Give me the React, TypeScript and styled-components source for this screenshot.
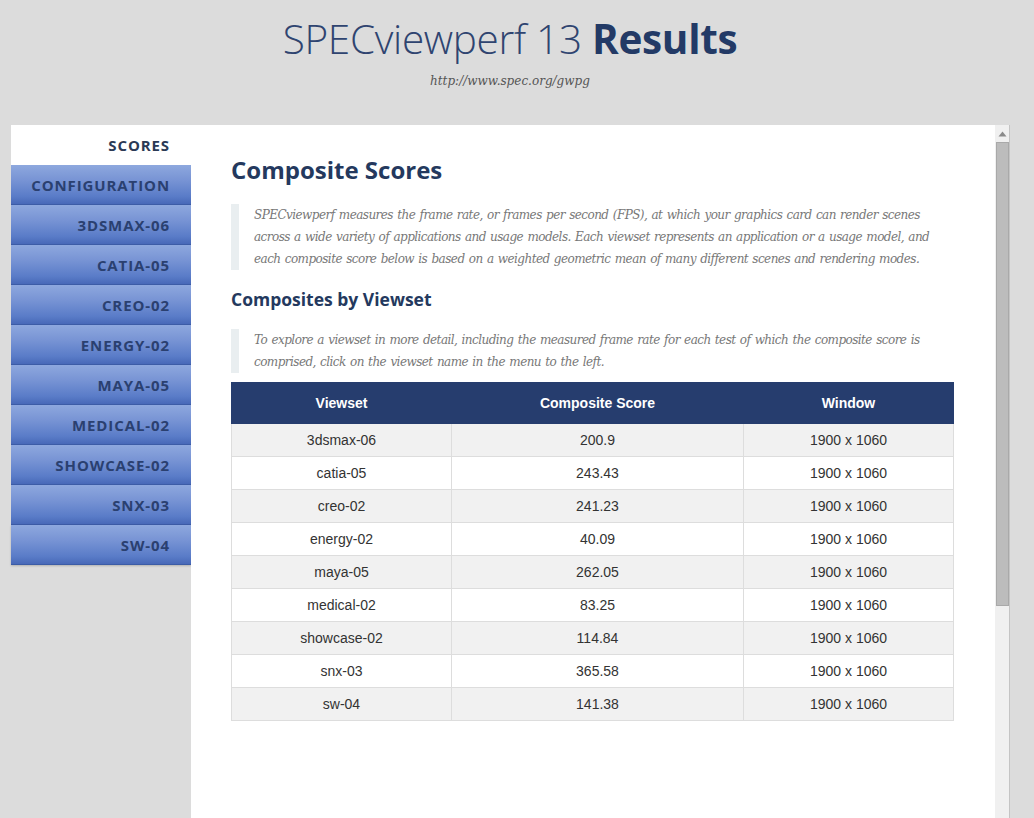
import styled, { createGlobalStyle } from 'styled-components';

type Row = { viewset: string; score: string; window: string };

const MENU = [
  'CONFIGURATION',
  '3DSMAX-06',
  'CATIA-05',
  'CREO-02',
  'ENERGY-02',
  'MAYA-05',
  'MEDICAL-02',
  'SHOWCASE-02',
  'SNX-03',
  'SW-04',
];

const ROWS: Row[] = [
  { viewset: '3dsmax-06', score: '200.9', window: '1900 x 1060' },
  { viewset: 'catia-05', score: '243.43', window: '1900 x 1060' },
  { viewset: 'creo-02', score: '241.23', window: '1900 x 1060' },
  { viewset: 'energy-02', score: '40.09', window: '1900 x 1060' },
  { viewset: 'maya-05', score: '262.05', window: '1900 x 1060' },
  { viewset: 'medical-02', score: '83.25', window: '1900 x 1060' },
  { viewset: 'showcase-02', score: '114.84', window: '1900 x 1060' },
  { viewset: 'snx-03', score: '365.58', window: '1900 x 1060' },
  { viewset: 'sw-04', score: '141.38', window: '1900 x 1060' },
];

const App = () => {
  return (
    <>
      <GlobalStyle />
      <Page>
        <Header>
          <Title>
            SPECviewperf 13 <strong>Results</strong>
          </Title>
          <SubTitle>http://www.spec.org/gwpg</SubTitle>
        </Header>
        <Main>
          <Sidebar>
            <TabActive>SCORES</TabActive>
            {MENU.map((item) => (
              <MenuItem key={item}>{item}</MenuItem>
            ))}
          </Sidebar>
          <Panel>
            <Heading>Composite Scores</Heading>
            <Quote $gap={18}>
              SPECviewperf measures the frame rate, or frames per second (FPS), at which your graphics card can
              render scenes across a wide variety of applications and usage models. Each viewset represents an
              application or a usage model, and each composite score below is based on a weighted geometric mean of
              many different scenes and rendering modes.
            </Quote>
            <SubHeading>Composites by Viewset</SubHeading>
            <Quote $gap={17}>
              To explore a viewset in more detail, including the measured frame rate for each test of which the
              composite score is comprised, click on the viewset name in the menu to the left.
            </Quote>
            <Table>
              <colgroup>
                <col style={{ width: 220 }} />
                <col style={{ width: 292 }} />
                <col />
              </colgroup>
              <thead>
                <tr>
                  <Th>Viewset</Th>
                  <Th>Composite Score</Th>
                  <Th>Window</Th>
                </tr>
              </thead>
              <tbody>
                {ROWS.map((row, i) => (
                  <Tr key={row.viewset} $odd={i % 2 === 0}>
                    <Td>{row.viewset}</Td>
                    <Td>{row.score}</Td>
                    <Td>{row.window}</Td>
                  </Tr>
                ))}
              </tbody>
            </Table>
          </Panel>
          <ScrollTrack>
            <ScrollArrow>
              <svg width="9" height="6" viewBox="0 0 9 6">
                <path d="M4.5 0.5 L8.5 5.5 L0.5 5.5 Z" fill="#8a8a8a" />
              </svg>
            </ScrollArrow>
            <ScrollThumb />
          </ScrollTrack>
        </Main>
      </Page>
    </>
  );
};

export default App;

const GlobalStyle = createGlobalStyle`
  html, body {
    margin: 0;
    padding: 0;
    background: #dcdcdc;
    overflow: hidden;
  }
`;

const Page = styled.div`
  width: 1034px;
  height: 818px;
  overflow: hidden;
  background: #dcdcdc;
`;

const Header = styled.div`
  height: 125px;
  padding-right: 14px;
  display: flex;
  flex-direction: column;
  align-items: center;
`;

const Title = styled.h1`
  margin: 12px 0 0;
  font-family: 'Open Sans', sans-serif;
  font-weight: 300;
  font-size: 40.5px;
  line-height: 54px;
  color: #2f4470;
  letter-spacing: -0.3px;

  strong {
    font-weight: 700;
    color: #233a66;
  }
`;

const SubTitle = styled.div`
  margin-top: 8px;
  font-family: 'DejaVu Serif', serif;
  font-style: italic;
  font-size: 12px;
  color: #555;
`;

const Main = styled.div`
  display: flex;
  align-items: flex-start;
  padding-left: 11px;
`;

const Sidebar = styled.div`
  width: 180px;
  flex-shrink: 0;
  display: flex;
  flex-direction: column;
`;

const TabActive = styled.div`
  height: 40px;
  background: #fff;
  box-sizing: border-box;
  padding-right: 21px;
  display: flex;
  align-items: center;
  justify-content: flex-end;
  font-family: 'Open Sans', sans-serif;
  font-weight: 700;
  font-size: 15px;
  letter-spacing: 0.9px;
  color: #2b3a55;
`;

const MenuItem = styled.div`
  height: 40px;
  box-sizing: border-box;
  padding-right: 21px;
  display: flex;
  align-items: center;
  justify-content: flex-end;
  background: linear-gradient(to bottom, #8ea8de 0%, #7793d4 40%, #5a7cc8 80%, #4869b8 100%);
  border-bottom: 1px solid #3c5ca6;
  font-family: 'Open Sans', sans-serif;
  font-weight: 700;
  font-size: 15px;
  letter-spacing: 0.9px;
  color: #2a4070;

  &:last-child {
    box-shadow: 0 1px 2px rgba(0, 0, 0, 0.2);
  }
`;

const Panel = styled.div`
  width: 804px;
  height: 693px;
  flex-shrink: 0;
  box-sizing: border-box;
  padding: 29px 41px 0 40px;
  background: #fff;
`;

const Heading = styled.h2`
  margin: 0;
  font-family: 'Open Sans', sans-serif;
  font-weight: 700;
  font-size: 24px;
  line-height: 32px;
  color: #24395e;
`;

const SubHeading = styled.h3`
  margin: 16px 0 0;
  font-family: 'Open Sans', sans-serif;
  font-weight: 700;
  font-size: 17.5px;
  line-height: 26px;
  color: #24395e;
`;

const Quote = styled.blockquote<{ $gap: number }>`
  margin: ${({ $gap }) => $gap}px 0 0;
  padding: 0 0 0 15px;
  border-left: 8px solid #e9eef0;
  font-family: 'DejaVu Serif', serif;
  font-style: italic;
  font-size: 12px;
  letter-spacing: -0.55px;
  word-spacing: 1px;
  line-height: 22px;
  color: #777;
`;

const Table = styled.table`
  margin-top: 9px;
  width: 723px;
  border-collapse: collapse;
  table-layout: fixed;
  font-family: 'Liberation Sans', Arial, sans-serif;
  font-size: 14px;
`;

const Th = styled.th`
  height: 40px;
  padding: 0;
  background: #263d6e;
  color: #fff;
  font-weight: 700;
  text-align: center;
  border: 1px solid #263d6e;
  border-left-color: #dddddd;

  &:first-child {
    border-left-color: #263d6e;
  }
`;

const Tr = styled.tr<{ $odd: boolean }>`
  background: ${({ $odd }) => ($odd ? '#f1f1f1' : '#fff')};
`;

const Td = styled.td`
  height: 32px;
  padding: 0;
  text-align: center;
  color: #333;
  border: 1px solid #dddddd;
`;

const ScrollTrack = styled.div`
  width: 15px;
  height: 693px;
  flex-shrink: 0;
  box-sizing: border-box;
  background: #f0f0f0;
  border-right: 1px solid #c4c4c4;
  display: flex;
  flex-direction: column;
  align-items: center;
`;

const ScrollArrow = styled.div`
  height: 17px;
  width: 100%;
  display: flex;
  align-items: center;
  justify-content: center;
`;

const ScrollThumb = styled.div`
  width: 13px;
  height: 464px;
  background: #bcbcbc;
  border: 1px solid #a9a9a9;
  box-sizing: border-box;
`;
